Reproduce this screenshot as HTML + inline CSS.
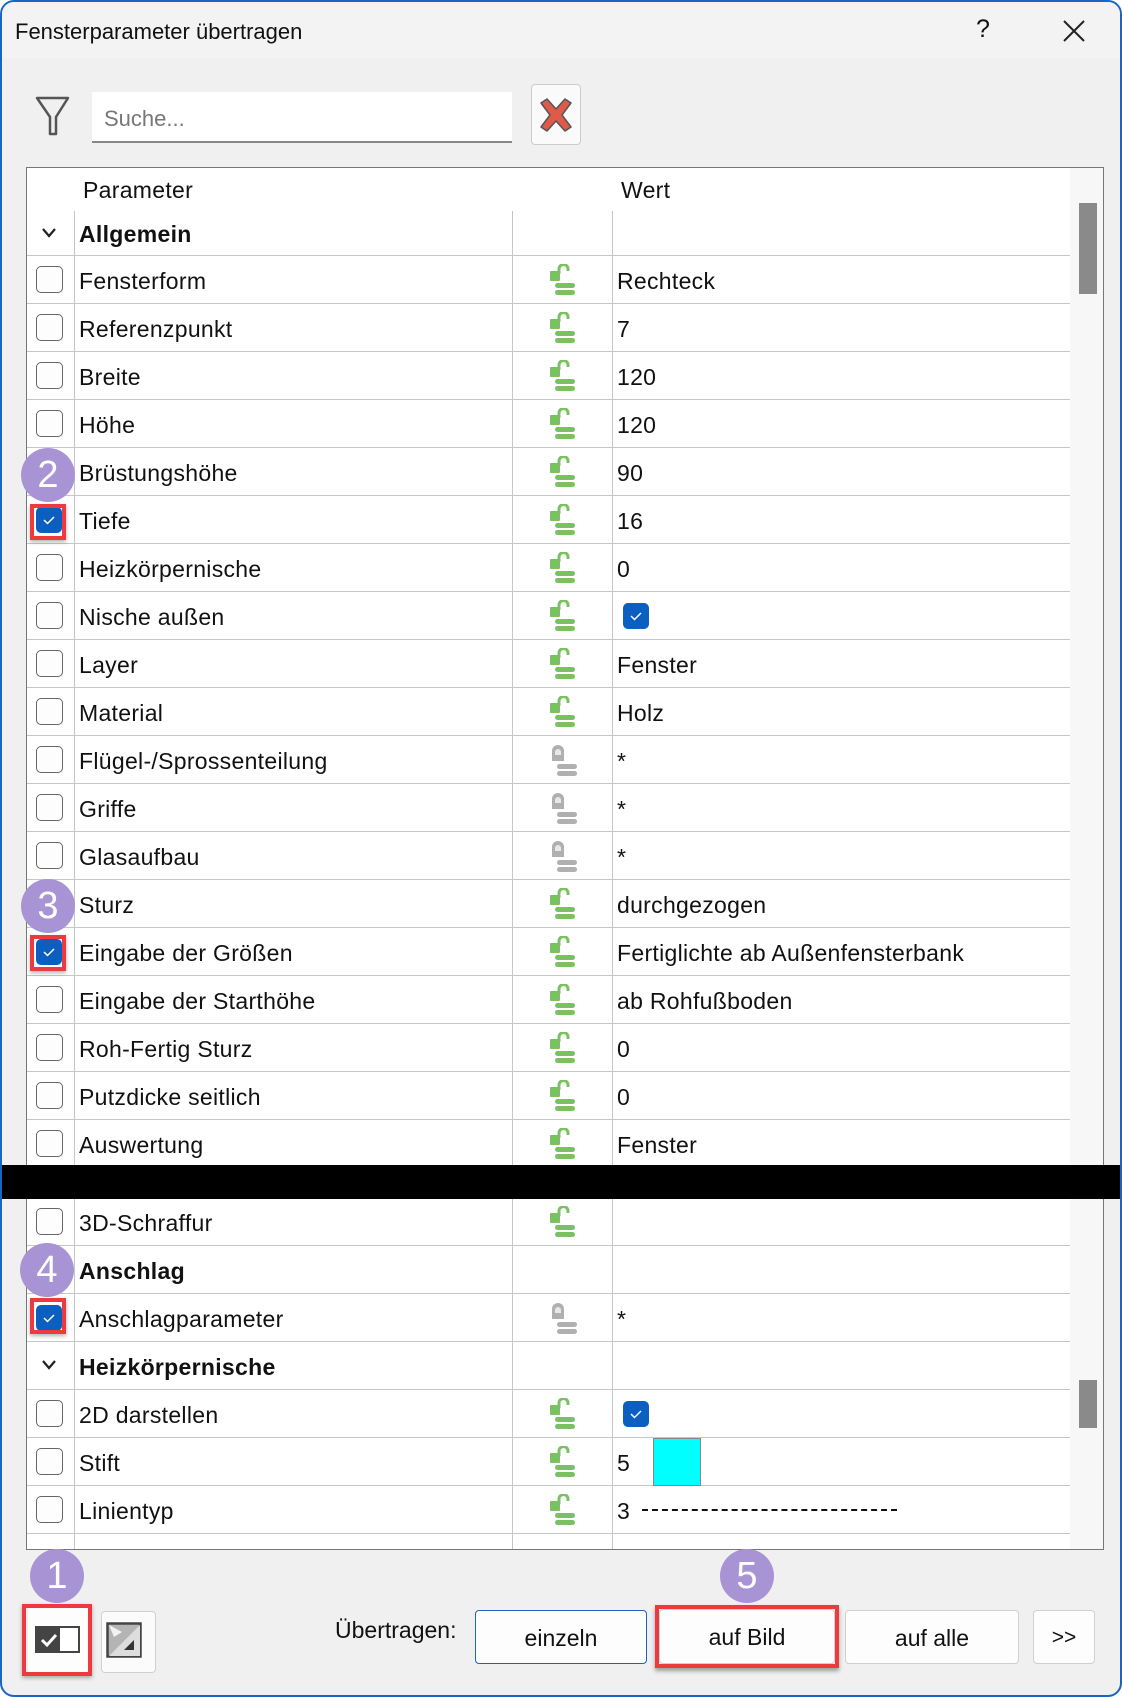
<!DOCTYPE html>
<html><head><meta charset="utf-8"><style>
*{box-sizing:border-box;margin:0;padding:0}
body{width:1122px;height:1697px;background:#fff;position:relative;overflow:hidden;font-family:"Liberation Sans",sans-serif;color:#111}
.win{position:absolute;left:0;top:0;width:1122px;height:1697px;border:2px solid #1a64c4;border-radius:14px;background:#f0f0f0;overflow:hidden}
.in{position:absolute;left:-2px;top:-1px;width:1122px;height:1697px}
.title{position:absolute;left:0;top:0;width:100%;height:57px;background:#f3f3f3}
.a{position:absolute}
.tbl{position:absolute;left:26px;top:166px;width:1078px;height:1383px;border:1px solid #777;background:#fff;overflow:hidden}
.row{position:absolute;left:0;width:1043px;height:48px;border-bottom:1px solid #c6c6c6;font-size:23px;letter-spacing:0.3px;line-height:50px}
.row .t{position:absolute;left:52px}
.row .v{position:absolute;left:590px}
.row.g .t{font-weight:bold}
.cb{position:absolute;left:9px;top:10px;width:27px;height:27px;border:1.5px solid #666;border-radius:5px;background:#fdfdfd}
.ck{position:absolute;width:26px;height:26px;border-radius:5px;background:#0a5fc0}
.ck svg{position:absolute;left:0;top:0}
.lk{position:absolute;left:522px;top:8px}
.vl{position:absolute;width:1px;background:#c6c6c6}
.circ{position:absolute;width:54px;height:54px;border-radius:50%;background:#a894d4;color:#fff;font-size:38px;line-height:54px;text-align:center}
.red{position:absolute;border:4px solid #ee3a3f;box-shadow:0 2px 4px rgba(0,0,0,.3)}
.btn{position:absolute;background:#fdfdfd;border:1px solid #d0d0d0;border-radius:4px;font-size:23px;text-align:center;line-height:54px}
</style></head><body>
<div class="win"><div class="in">
<div class="title"></div>
<div class="a" style="left:15px;top:18px;font-size:22px">Fensterparameter übertragen</div>
<div class="a" style="left:976px;top:14px;font-size:25px">?</div>
<svg class="a" style="left:1062px;top:18px" width="24" height="24"><path d="M2 2L22 22M22 2L2 22" stroke="#222" stroke-width="2"/></svg>

<svg class="a" style="left:34px;top:94px" width="38" height="42"><path d="M3 3H34L22 22V39H16V22Z" fill="none" stroke="#555" stroke-width="2.5" stroke-linejoin="round"/></svg>
<div class="a" style="left:92px;top:91px;width:420px;height:51px;background:#fff;border-bottom:2px solid #888"></div>
<div class="a" style="left:104px;top:105px;font-size:22px;color:#777">Suche...</div>
<div class="a" style="left:531px;top:83px;width:50px;height:61px;background:#fafafa;border:1px solid #ccc;border-radius:4px"></div>
<svg class="a" style="left:537px;top:96px" width="38" height="36"><path d="M4 6L10 2L19 12L28 2L34 6L25 18L34 30L28 34L19 24L10 34L4 30L13 18Z" fill="#e05a4a" stroke="#555" stroke-width="1.5" stroke-linejoin="round"/></svg>

<div class="tbl">
<div class="vl" style="left:47px;top:0;height:1383px"></div>
<div class="vl" style="left:485px;top:0;height:1383px"></div>
<div class="vl" style="left:585px;top:0;height:1383px"></div>
<div class="a" style="left:0;top:0;width:1043px;height:43px;background:#fff"></div>
<div class="a" style="left:56px;top:9px;font-size:23px;letter-spacing:0.3px">Parameter</div>
<div class="a" style="left:594px;top:9px;font-size:23px;letter-spacing:0.3px">Wert</div>
<div class="a" style="left:1043px;top:0;width:34px;height:1383px;background:#f7f7f7"></div>
<div class="a" style="left:1052px;top:35px;width:18px;height:91px;background:#8a8a8a"></div>
<div class="a" style="left:1052px;top:1212px;width:18px;height:48px;background:#8a8a8a"></div>

<div class="row g" style="top:43px;height:45px;line-height:46px"><svg class="a" style="left:14px;top:16px" width="16" height="12"><path d="M2 2L8 9L14 2" fill="none" stroke="#222" stroke-width="2.2"/></svg><span class="t">Allgemein</span></div>

<svg width="0" height="0" style="position:absolute"><defs>
<g id="gl"><rect x="1" y="7" width="10" height="10" rx="1" fill="#7bc063"/><path d="M10 10V5a4.5 4.5 0 0 1 9 0v2" fill="none" stroke="#7bc063" stroke-width="3"/><rect x="6" y="19" width="20" height="5" rx="2.5" fill="#7bc063"/><rect x="6" y="26" width="20" height="5" rx="2.5" fill="#7bc063"/></g>
<g id="gr"><path d="M3 17V7a6 6 0 0 1 12 0v10Z" fill="#b0b0b0"/><path d="M6 8a3 3 0 0 1 6 0v3H6Z" fill="#e8e8e8"/><rect x="8" y="20" width="20" height="5" rx="2.5" fill="#b0b0b0"/><rect x="8" y="27" width="20" height="5" rx="2.5" fill="#b0b0b0"/></g>
</defs></svg>

<div class="row" style="top:88px"><div class="cb"></div><span class="t">Fensterform</span><svg class="lk" width="30" height="34"><use href="#gl"/></svg><span class="v">Rechteck</span></div>
<div class="row" style="top:136px"><div class="cb"></div><span class="t">Referenzpunkt</span><svg class="lk" width="30" height="34"><use href="#gl"/></svg><span class="v">7</span></div>
<div class="row" style="top:184px"><div class="cb"></div><span class="t">Breite</span><svg class="lk" width="30" height="34"><use href="#gl"/></svg><span class="v">120</span></div>
<div class="row" style="top:232px"><div class="cb"></div><span class="t">Höhe</span><svg class="lk" width="30" height="34"><use href="#gl"/></svg><span class="v">120</span></div>
<div class="row" style="top:280px"><div class="cb"></div><span class="t">Brüstungshöhe</span><svg class="lk" width="30" height="34"><use href="#gl"/></svg><span class="v">90</span></div>
<div class="row" style="top:328px"><div class="ck" style="left:9px;top:11px"><svg width="26" height="26"><path d="M8 13L11.5 16.5L18 10" fill="none" stroke="#fff" stroke-width="1.5"/></svg></div><span class="t">Tiefe</span><svg class="lk" width="30" height="34"><use href="#gl"/></svg><span class="v">16</span></div>
<div class="row" style="top:376px"><div class="cb"></div><span class="t">Heizkörpernische</span><svg class="lk" width="30" height="34"><use href="#gl"/></svg><span class="v">0</span></div>
<div class="row" style="top:424px"><div class="cb"></div><span class="t">Nische außen</span><svg class="lk" width="30" height="34"><use href="#gl"/></svg><div class="ck" style="left:596px;top:11px"><svg width="26" height="26"><path d="M8 13L11.5 16.5L18 10" fill="none" stroke="#fff" stroke-width="1.5"/></svg></div></div>
<div class="row" style="top:472px"><div class="cb"></div><span class="t">Layer</span><svg class="lk" width="30" height="34"><use href="#gl"/></svg><span class="v">Fenster</span></div>
<div class="row" style="top:520px"><div class="cb"></div><span class="t">Material</span><svg class="lk" width="30" height="34"><use href="#gl"/></svg><span class="v">Holz</span></div>
<div class="row" style="top:568px"><div class="cb"></div><span class="t">Flügel-/Sprossenteilung</span><svg class="lk" width="30" height="34"><use href="#gr"/></svg><span class="v">*</span></div>
<div class="row" style="top:616px"><div class="cb"></div><span class="t">Griffe</span><svg class="lk" width="30" height="34"><use href="#gr"/></svg><span class="v">*</span></div>
<div class="row" style="top:664px"><div class="cb"></div><span class="t">Glasaufbau</span><svg class="lk" width="30" height="34"><use href="#gr"/></svg><span class="v">*</span></div>
<div class="row" style="top:712px"><div class="cb"></div><span class="t">Sturz</span><svg class="lk" width="30" height="34"><use href="#gl"/></svg><span class="v">durchgezogen</span></div>
<div class="row" style="top:760px"><div class="ck" style="left:9px;top:11px"><svg width="26" height="26"><path d="M8 13L11.5 16.5L18 10" fill="none" stroke="#fff" stroke-width="1.5"/></svg></div><span class="t">Eingabe der Größen</span><svg class="lk" width="30" height="34"><use href="#gl"/></svg><span class="v">Fertiglichte ab Außenfensterbank</span></div>
<div class="row" style="top:808px"><div class="cb"></div><span class="t">Eingabe der Starthöhe</span><svg class="lk" width="30" height="34"><use href="#gl"/></svg><span class="v">ab Rohfußboden</span></div>
<div class="row" style="top:856px"><div class="cb"></div><span class="t">Roh-Fertig Sturz</span><svg class="lk" width="30" height="34"><use href="#gl"/></svg><span class="v">0</span></div>
<div class="row" style="top:904px"><div class="cb"></div><span class="t">Putzdicke seitlich</span><svg class="lk" width="30" height="34"><use href="#gl"/></svg><span class="v">0</span></div>
<div class="row" style="top:952px"><div class="cb"></div><span class="t">Auswertung</span><svg class="lk" width="30" height="34"><use href="#gl"/></svg><span class="v">Fenster</span></div>

<div class="row" style="top:1030px"><div class="cb"></div><span class="t">3D-Schraffur</span><svg class="lk" width="30" height="34"><use href="#gl"/></svg></div>
<div class="row g" style="top:1078px"><span class="t">Anschlag</span></div>
<div class="row" style="top:1126px"><div class="ck" style="left:9px;top:11px"><svg width="26" height="26"><path d="M8 13L11.5 16.5L18 10" fill="none" stroke="#fff" stroke-width="1.5"/></svg></div><span class="t">Anschlagparameter</span><svg class="lk" width="30" height="34"><use href="#gr"/></svg><span class="v">*</span></div>
<div class="row g" style="top:1174px"><svg class="a" style="left:14px;top:17px" width="16" height="12"><path d="M2 2L8 9L14 2" fill="none" stroke="#222" stroke-width="2.2"/></svg><span class="t">Heizkörpernische</span></div>
<div class="row" style="top:1222px"><div class="cb"></div><span class="t">2D darstellen</span><svg class="lk" width="30" height="34"><use href="#gl"/></svg><div class="ck" style="left:596px;top:11px"><svg width="26" height="26"><path d="M8 13L11.5 16.5L18 10" fill="none" stroke="#fff" stroke-width="1.5"/></svg></div></div>
<div class="row" style="top:1270px"><div class="cb"></div><span class="t">Stift</span><svg class="lk" width="30" height="34"><use href="#gl"/></svg><span class="v">5</span><div class="a" style="left:626px;top:0;width:48px;height:48px;background:#00ffff;border:1px solid #888"></div></div>
<div class="row" style="top:1318px"><div class="cb"></div><span class="t">Linientyp</span><svg class="lk" width="30" height="34"><use href="#gl"/></svg><span class="v">3</span><div class="a" style="left:615px;top:23px;width:255px;border-top:2px dashed #111"></div></div>
<div class="row" style="top:1366px"><span class="a" style="left:52px;top:12px;font-weight:bold;font-size:23px">Ö</span></div>
</div>
<div class="a" style="left:0;top:1164px;width:1124px;height:34px;background:#000"></div>

<div class="circ" style="left:21px;top:447px">2</div>
<div class="circ" style="left:21px;top:878px">3</div>
<div class="circ" style="left:20px;top:1242px">4</div>
<div class="red" style="left:30px;top:503px;width:36px;height:36px"></div>
<div class="red" style="left:30px;top:934px;width:36px;height:36px"></div>
<div class="red" style="left:30px;top:1297px;width:36px;height:36px"></div>

<div class="circ" style="left:30px;top:1548px">1</div>
<div class="circ" style="left:720px;top:1548px">5</div>

<div class="a" style="left:28px;top:1607px;width:62px;height:64px;background:#fdfdfd"></div>
<div class="a" style="left:35px;top:1625px;width:45px;height:27px;border:2px solid #444;background:#fff"><div class="a" style="left:0;top:0;width:23px;height:23px;background:#444"></div><svg class="a" style="left:2px;top:3px" width="20" height="18"><path d="M3 9L8 14L17 4" fill="none" stroke="#fff" stroke-width="3"/></svg></div>
<div class="red" style="left:22px;top:1603px;width:70px;height:72px"></div>
<div class="a" style="left:101px;top:1610px;width:55px;height:62px;background:#fbfbfb;border:1px solid #d0d0d0;border-radius:4px"></div>
<svg class="a" style="left:106px;top:1621px" width="38" height="38"><rect x="1.5" y="1.5" width="33" height="33" fill="#b4b4b4" stroke="#444" stroke-width="2.5"/><path d="M3 34L34 3V34Z" fill="#ddd"/><path d="M18 28L28 18V28Z" fill="#333"/><path d="M3 3L16 10L8 15Z" fill="#f3f3f3"/></svg>

<div class="a" style="left:335px;top:1616px;font-size:23px">Übertragen:</div>
<div class="btn" style="left:475px;top:1609px;width:172px;height:54px;border-color:#1a64c4">einzeln</div>
<div class="btn" style="left:659px;top:1608px;width:176px;height:55px">auf Bild</div>
<div class="red" style="left:655px;top:1604px;width:184px;height:63px;box-shadow:0 3px 4px rgba(0,0,0,.35)"></div>
<div class="btn" style="left:845px;top:1609px;width:174px;height:54px">auf alle</div>
<div class="btn" style="left:1033px;top:1609px;width:62px;height:54px;font-size:21px">&gt;&gt;</div>
</div></div>
</body></html>
